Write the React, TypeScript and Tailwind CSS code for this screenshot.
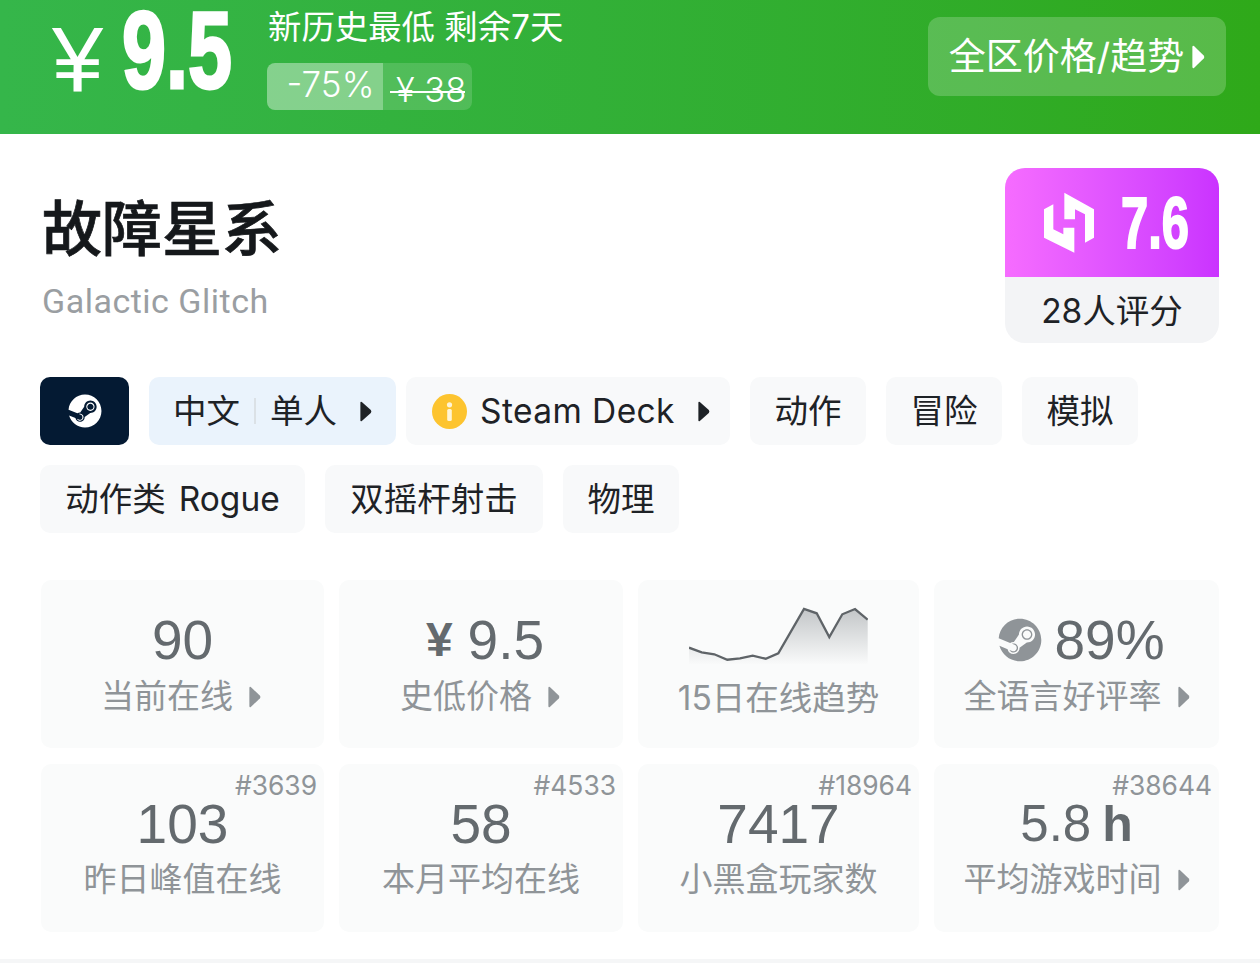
import React from "react";
import { FaSteam } from "react-icons/fa";

const sans = "font-['Inter','Noto_Sans_CJK_SC',sans-serif]";

function Caret({ className }: { className: string }) {
  return (
    <svg viewBox="0 0 10 18" className={className} fill="currentColor" preserveAspectRatio="none">
      <path d="M1.5 0.8 L9 7.8 Q10 9 9 10.2 L1.5 17.2 Q0.3 17.8 0.3 16.4 V1.6 Q0.3 0.2 1.5 0.8Z" />
    </svg>
  );
}

function Tag({ children, w, bg = "bg-[#f8f9fa]" }: { children: React.ReactNode; w: string; bg?: string }) {
  return (
    <div className={`h-[68px] ${w} ${bg} rounded-[10px] flex items-center justify-center text-[33.5px] text-[#1e2226] shrink-0 whitespace-nowrap`}>
      {children}
    </div>
  );
}

function Stat({
  value,
  label,
  rank,
  caret,
  icon,
  labelClass = "",
}: {
  value?: React.ReactNode;
  label: string;
  rank?: string;
  caret?: boolean;
  icon?: React.ReactNode;
  labelClass?: string;
}) {
  return (
    <div className="relative h-[168px] bg-[#fafbfb] rounded-[10px] flex flex-col items-center pt-[28px]">
      {rank && <div className="absolute right-[7px] top-[3px] text-[26.4px] leading-[36px] text-[#8f9498]">{rank}</div>}
      <div className="h-[64px] flex items-center justify-center text-[55px] leading-[64px] text-[#646a6e] font-['Liberation_Sans','Noto_Sans_CJK_SC',sans-serif]">
        {icon}
        {value}
      </div>
      <div className={`h-[48px] flex items-center text-[33px] text-[#8f9498] whitespace-nowrap ${labelClass}`}>
        {label}
        {caret && <Caret className="w-[12px] h-[22px] ml-[16px] text-[#8f9498]" />}
      </div>
    </div>
  );
}

function Spark() {
  const line =
    "0,47.7 12.7,52.3 25.3,54.3 38.3,59.7 51,58.3 63.7,55.7 76.7,58.7 89.3,53.3 115,9 127.7,13.3 140.3,37 153.3,14.3 166,9 178.7,19.7";
  return (
    <svg viewBox="0 0 179 64" className="w-[179px] h-[64px] shrink-0">
      <defs>
        <linearGradient id="sp" x1="0" y1="0" x2="0" y2="1">
          <stop offset="0" stopColor="#c3c6c8" />
          <stop offset="1" stopColor="#f9fafa" />
        </linearGradient>
      </defs>
      <polygon points={`${line} 178.7,64 0,64`} fill="url(#sp)" />
      <polyline points={line} fill="none" stroke="#5f6468" strokeWidth="2.3" />
    </svg>
  );
}

export default function App() {
  return (
    <div className={`w-[1260px] h-[963px] bg-white overflow-hidden ${sans}`}>
      <header className="h-[134px] bg-gradient-to-r from-[#35b64a] to-[#2fa919] flex items-start text-white">
        <div className="w-[122px] pl-[52px] pt-[10px] text-[92px] leading-[100px] font-['Liberation_Sans',sans-serif] shrink-0">
          ¥
        </div>
        <div className="w-[155px] -mr-[9px] h-[100px] shrink-0 text-[110px] leading-[100px] font-bold font-['Liberation_Sans',sans-serif] origin-left scale-x-[0.72] [-webkit-text-stroke:3px_white]">
          9.5
        </div>
        <div className="pt-[5px] shrink-0">
          <div className="text-[33.4px] leading-[44px] whitespace-nowrap">新历史最低 剩余7天</div>
          <div className="mt-[14px] -ml-[1px] h-[47px] w-[205px] flex">
            <div className="w-[116px] bg-white/40 rounded-l-[8px] text-[35px] leading-[42px] font-light text-center pl-[11px] whitespace-nowrap">-75%</div>
            <div className="relative flex-1 bg-white/15 rounded-r-[8px] text-[34.5px] leading-[47px] font-light pl-[13px] pt-[3px] whitespace-nowrap">
              ¥ 38
              <div className="absolute left-[7px] top-[28px] w-[75px] h-[2px] bg-white" />
            </div>
          </div>
        </div>
        <div className="ml-auto mr-[34px] mt-[17px] w-[298px] h-[79px] bg-white/20 rounded-[12px] flex items-center justify-center text-[37px] whitespace-nowrap shrink-0">
          全区价格/趋势
          <Caret className="w-[13px] h-[24px] ml-[8px]" />
        </div>
      </header>

      <section className="h-[243px] flex justify-between pl-[42px] pr-[41px] pt-[34px]">
        <div className="pt-[21px]">
          <div className="text-[60px] leading-[80px] font-medium text-[#15181b] [-webkit-text-stroke:0.7px_#15181b] whitespace-nowrap">故障星系</div>
          <div className="mt-[8px] text-[34px] leading-[48px] text-[#9a9ea2] font-['Roboto','Noto_Sans_CJK_SC',sans-serif] tracking-[0.5px] whitespace-nowrap">Galactic Glitch</div>
        </div>
        <div className="w-[214px] h-[175px] rounded-[20px] overflow-hidden bg-[#f3f4f6] shrink-0">
          <div className="h-[109px] bg-gradient-to-r from-[#f66cff] to-[#ca33ff] flex items-center text-white">
            <svg viewBox="0 0 240 240" className="w-[80px] h-[80px] ml-[25px] -mt-[4px] shrink-0" fill="#fff">
              <path d="M42 85 L70 70 V145 L100 160 V140 H133 V215 L42 170 Z" />
              <path d="M103 35 L192 85 V170 L165 185 V100 L135 85 V115 H103 Z" />
            </svg>
            <div className="ml-[11px] w-[100px] -mr-[30px] text-[72px] leading-[80px] font-bold font-['Liberation_Sans',sans-serif] origin-left scale-x-[0.68] [-webkit-text-stroke:2px_white] whitespace-nowrap">
              7.6
            </div>
          </div>
          <div className="h-[66px] pt-[2px] flex items-center justify-center text-[33.5px] text-[#1e2226] whitespace-nowrap">28人评分</div>
        </div>
      </section>

      <section className="pl-[40px] flex flex-col gap-[20px]">
        <div className="flex">
          <Tag w="w-[89px]" bg="bg-[#041a33]">
            <FaSteam className="w-[34px] h-[34px] text-white" />
          </Tag>
          <div className="w-[20px] shrink-0" />
          <Tag w="w-[247px]" bg="bg-[#eaf3fc]">
            <span>中文</span>
            <span className="mx-[14px] w-[2px] h-[26px] bg-[#dbe1e6]" />
            <span>单人</span>
            <Caret className="w-[12px] h-[21px] ml-[23px] text-[#1e2226]" />
          </Tag>
          <div className="w-[10px] shrink-0" />
          <Tag w="w-[324px]">
            <svg viewBox="0 0 35 35" className="w-[35px] h-[35px] ml-[6px] shrink-0">
              <circle cx="17.5" cy="17.5" r="17.5" fill="#fdc42f" />
              <circle cx="17.5" cy="10.8" r="2.6" fill="#fff5d6" />
              <rect x="15.2" y="15" width="4.6" height="12" rx="1.5" fill="#fff5d6" />
            </svg>
            <span className="ml-[13px] tracking-[0.4px]">Steam Deck</span>
            <Caret className="w-[12px] h-[21px] ml-[23px] text-[#1e2226]" />
          </Tag>
          <div className="w-[20px] shrink-0" />
          <Tag w="w-[116px]">动作</Tag>
          <div className="w-[20px] shrink-0" />
          <Tag w="w-[116px]">冒险</Tag>
          <div className="w-[20px] shrink-0" />
          <Tag w="w-[116px]">模拟</Tag>
        </div>
        <div className="flex gap-[20px]">
          <Tag w="w-[265px]">
            <span>动作类</span>
            <span className="ml-[13px]">Rogue</span>
          </Tag>
          <Tag w="w-[218px]">双摇杆射击</Tag>
          <Tag w="w-[116px]">物理</Tag>
        </div>
      </section>

      <section className="mt-[47px] ml-[41px] grid grid-cols-[283px_284px_281px_285px] gap-x-[15px] gap-y-[16px]">
        <Stat value="90" label="当前在线" caret labelClass="mt-[1px] pr-[3px]" />
        <Stat
          value={
            <>
              <span className="ml-[8px] text-[48px] font-bold mr-[15px]">¥</span>9.5
            </>
          }
          label="史低价格"
          caret
          labelClass="mt-[1px] pr-[2px]"
        />
        <div className="h-[168px] bg-[#fafbfb] rounded-[10px] flex flex-col items-center pt-[20px]">
          <Spark />
          <div className="mt-[10px] h-[48px] flex items-center text-[33.5px] text-[#8f9498] whitespace-nowrap">15日在线趋势</div>
        </div>
        <Stat
          value="89%"
          label="全语言好评率"
          caret
          labelClass="mt-[1px]"
          icon={<FaSteam className="w-[44px] h-[44px] ml-[10px] mr-[12px] text-[#8f9498]" />}
        />
        <Stat value="103" label="昨日峰值在线" rank="#3639" />
        <Stat value="58" label="本月平均在线" rank="#4533" />
        <Stat value="7417" label="小黑盒玩家数" rank="#18964" />
        <Stat
          value={
            <>
              <span className="text-[51px]">5.8</span>
              <span className="ml-[11px] text-[50px] font-bold">h</span>
            </>
          }
          label="平均游戏时间"
          rank="#38644"
          caret
        />
      </section>

      <div className="mt-[27px] h-[4px] bg-[#f5f6f7]" />
    </div>
  );
}
